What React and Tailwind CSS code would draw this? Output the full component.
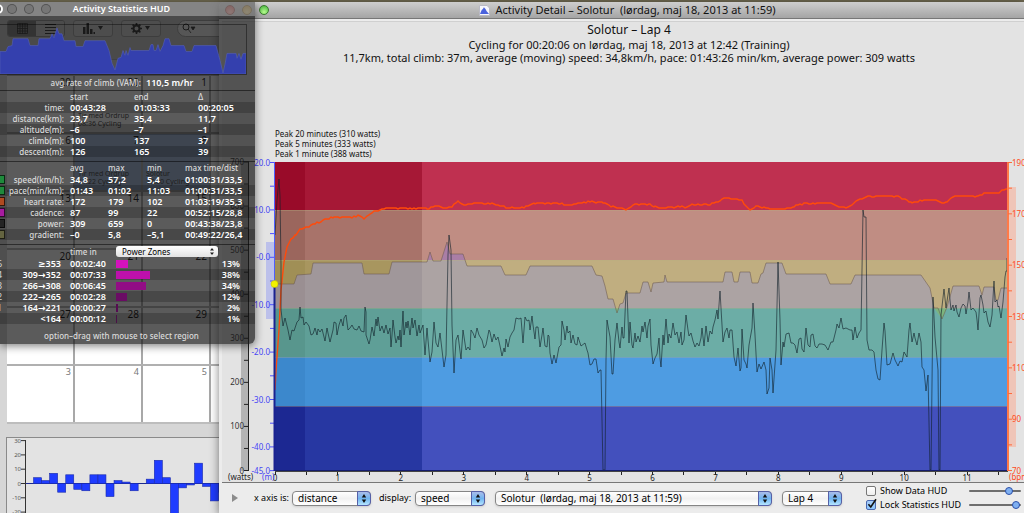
import React from "react";

const PLOT = { x: 275, y: 162, w: 733, h: 309 };

const ELEVATION =
  "275,284 294,284 297,275 311,274 313,263 362,263 364,274 389,274 392,262 427,262 430,252 433,261 441,261 447,242 450,254 463,254 467,266 501,266 505,275 526,275 530,266 592,266 596,275 602,276 605,286 608,299 613,299 617,313 620,304 623,303 626,293 640,293 643,282 648,282 651,292 653,283 664,282 665,275 667,282 723,282 725,272 732,272 734,282 738,282 740,272 750,272 752,283 758,283 761,274 763,273 766,263 782,263 786,274 826,274 830,284 851,284 855,275 921,275 930,288 934,308 938,308 942,319 947,307 953,286 979,286 982,295 984,287 994,287 996,300 998,300 1001,288 1008,288";

const POWER =
  "275,235 277,200 279,179 280,196 281,265 281,310 283,326 285,318 288,330 290,340 292,330 294,331 297,322 299,320 300,307 301,318 303,317 304,325 306,322 309,326 311,335 313,334 315,328 317,335 318,329 320,332 322,329 325,341 327,328 328,333 330,342 333,330 334,322 336,323 337,335 339,325 341,319 343,326 344,318 346,315 348,330 350,328 352,325 354,329 357,330 359,326 361,331 364,332 365,307 366,312 366,335 369,344 370,340 372,327 374,336 376,319 377,326 378,317 380,331 382,326 384,333 386,325 388,334 390,328 391,347 392,335 393,320 395,337 396,343 398,336 399,340 400,330 401,347 403,311 404,335 406,322 407,328 408,321 410,335 412,318 413,328 415,320 417,336 419,325 420,333 423,325 425,355 427,328 428,340 430,362 432,352 434,322 436,343 438,347 440,333 442,350 444,367 446,355 448,255 449,235 451,250 452,325 454,373 456,340 458,335 461,359 463,330 466,350 468,347 470,350 471,330 473,333 475,338 477,328 479,335 482,340 484,348 486,345 489,330 490,332 492,342 494,334 496,340 498,337 500,346 502,356 504,348 505,352 506,339 508,347 510,337 512,333 514,330 516,318 519,319 521,318 523,343 525,317 527,321 529,320 530,330 532,316 533,325 535,339 536,327 538,327 540,347 542,335 543,328 545,346 547,347 548,335 549,336 550,353 552,364 554,355 556,363 559,347 561,345 562,321 564,330 565,340 567,326 568,333 570,331 571,343 573,335 575,344 577,345 578,337 581,346 585,343 587,350 588,353 590,365 592,364 594,359 596,359 598,373 600,370 601,370 603,470 605,470 606,360 607,320 610,337 612,374 613,374 615,340 617,323 619,342 620,348 622,327 623,338 624,338 626,291 627,291 628,318 629,343 630,322 632,345 633,348 635,333 636,342 638,336 640,342 642,326 643,332 645,322 647,338 648,326 650,319 651,345 653,364 655,358 657,354 659,338 660,358 661,367 663,335 664,345 666,319 668,343 669,334 671,338 673,323 675,335 677,332 679,343 681,332 682,345 684,340 686,315 688,330 689,336 691,333 693,341 695,347 697,343 699,346 701,338 702,328 704,346 706,326 708,342 710,331 712,334 713,327 715,320 717,310 718,319 720,291 721,308 723,342 725,332 727,328 729,338 730,330 732,330 734,357 736,366 738,348 740,371 741,368 742,329 744,360 746,364 747,368 749,345 752,328 753,303 755,335 757,372 759,364 761,369 764,362 766,370 767,394 769,388 770,358 772,370 773,393 776,350 778,262 780,320 781,365 783,342 784,347 786,334 789,333 791,343 793,343 795,345 797,353 799,339 801,338 802,349 804,352 806,328 808,345 810,347 811,335 813,334 815,346 817,348 819,344 822,344 825,345 828,350 831,342 833,342 836,330 837,324 839,328 841,318 843,329 846,328 850,330 852,330 853,340 855,327 857,338 859,333 861,330 863,210 864,217 866,217 867,340 869,350 872,350 874,352 876,370 878,379 880,380 882,350 884,323 885,331 887,365 890,364 893,353 895,360 898,366 900,361 902,362 904,352 907,357 909,330 910,323 912,342 914,333 915,338 917,345 919,333 921,342 922,367 924,370 926,391 928,375 930,470 931,470 933,297 935,337 938,370 939,470 940,470 941,315 944,289 946,308 949,288 950,300 951,310 953,305 954,311 956,305 957,312 959,317 961,308 963,304 965,306 966,314 968,302 969,292 971,310 973,308 976,312 977,320 978,330 980,298 981,295 983,305 984,313 986,311 988,322 990,327 992,315 994,281 995,302 997,300 998,307 999,306 1001,318 1003,302 1005,277 1006,271 1007,271 1007,258";

const HEART_KNOTS = [
  [275, 390], [276, 370], [279, 330], [281, 290], [284, 262], [287, 247], [291, 239], [296, 234],
  [300, 229], [307, 227], [315, 223], [321, 221], [327, 218], [334, 217], [350, 217], [358, 215],
  [365, 218], [370, 213], [380, 209], [390, 208], [427, 208], [435, 206], [450, 207], [454, 204],
  [458, 201], [462, 204], [480, 203], [494, 203], [500, 206], [520, 208], [530, 205], [535, 203],
  [560, 203], [570, 205], [580, 203], [588, 201], [603, 202], [609, 205], [618, 208], [627, 209],
  [633, 204], [650, 204], [655, 206], [662, 208], [682, 206], [685, 208], [692, 204], [710, 204],
  [716, 202], [725, 198], [742, 200], [747, 207], [750, 210], [756, 206], [775, 209], [785, 209],
  [794, 206], [805, 203], [831, 203], [840, 207], [848, 207], [856, 201], [868, 196], [898, 196],
  [905, 199], [912, 202], [920, 200], [938, 200], [942, 203], [947, 202], [953, 196], [978, 196],
  [985, 193], [999, 193], [1002, 190], [1008, 189],
];

function heartTrace() {
  const out = [];
  for (let i = 0; i < HEART_KNOTS.length - 1; i++) {
    const [x0, y0] = HEART_KNOTS[i];
    const [x1, y1] = HEART_KNOTS[i + 1];
    for (let x = x0; x < x1; x += 2) {
      let y = y0 + ((y1 - y0) * (x - x0)) / (x1 - x0);
      if (x > 291) {
        const n = Math.sin(x * 12.9898) * 43758.5453;
        y = Math.round(y) + (n - Math.floor(n) > 0.72 ? 1 : 0);
      }
      out.push(`${x},${y}`);
    }
  }
  out.push("1008,189");
  return out.join(" ");
}

const COLUMNS = [
  { id: "a", x: 275, w: 30, zones: ["#990b29", "#9b665d", "#a08f56", "#58968d", "#3c88cc", "#1c2892"], area: "#9a8f92" },
  { id: "b", x: 305, w: 117, zones: ["#a61836", "#a8736a", "#a8965f", "#5f9f97", "#4290d5", "#2737a2"], area: "#a0979a" },
  { id: "c", x: 422, w: 586, zones: ["#bf3050", "#c08d83", "#c0ae80", "#6cada6", "#4e9ce2", "#4350bd"], area: "#aca3a3" },
];
const ZONE_Y = [162, 210, 260, 308, 357, 406, 471];

function Plot() {
  const area = `275,471 ${ELEVATION} 1008,471`;
  return (
    <svg
      className="block h-full w-full"
      viewBox={`${PLOT.x} ${PLOT.y} ${PLOT.w} ${PLOT.h}`}
      preserveAspectRatio="none"
      role="img"
      aria-label="Heart rate, power and altitude over distance"
    >
      <defs>
        <clipPath id="above"><rect x="275" y="162" width="733" height="98" /></clipPath>
        {COLUMNS.map((c) => (
          <clipPath id={`col-${c.id}`} key={c.id}>
            <rect x={c.x} y="260" width={c.w} height="48" />
          </clipPath>
        ))}
      </defs>
      {COLUMNS.map((c) => (
        <g key={c.id}>
          {c.zones.map((fill, i) => (
            <rect key={fill} x={c.x} y={ZONE_Y[i]} width={c.w} height={ZONE_Y[i + 1] - ZONE_Y[i]} fill={fill} />
          ))}
          <polygon points={area} fill={c.area} clipPath={`url(#col-${c.id})`} />
        </g>
      ))}
      <polygon points={area} fill="#aa7ea6" clipPath="url(#above)" />
      <polygon points="934,308 942,319 947,308" fill="#7cb57f" />
      <polygon points="615,308 617,313 619,308" fill="#7cb57f" />
      {ZONE_Y.slice(1, 6).map((y) => (
        <line key={y} x1="275" x2="1008" y1={y + 0.5} y2={y + 0.5} stroke="#b8b080" strokeOpacity="0.35" />
      ))}
      <polyline points={ELEVATION} fill="none" stroke="#6b5a50" strokeOpacity="0.55" vectorEffect="non-scaling-stroke" />
      <polyline points={heartTrace()} fill="none" stroke="#ff4a0a" strokeWidth="1.4" vectorEffect="non-scaling-stroke" />
      <polyline points={POWER} fill="none" stroke="#10202a" strokeOpacity="0.62" vectorEffect="non-scaling-stroke" />
      <line x1="275" x2="1008" y1="470.5" y2="470.5" stroke="#141c6c" vectorEffect="non-scaling-stroke" />
    </svg>
  );
}

const ALTITUDE = [20, 15, 10, 5, 0, -5, -10, -15, -20, -25, -30, -35, -40, -45];
const WATTS = [700, 650, 600, 550, 500, 450, 400, 350, 300, 250, 200, 150, 100, 50, 0];

function LeftAxes() {
  return (
    <svg className="relative z-10 block h-[325px] w-[53px] shrink-0 overflow-visible" viewBox="222 162 53 325" fontFamily='"Noto Sans", sans-serif' fontSize="8">
      <rect x="241" y="162" width="8" height="309" fill="#b4b4b4" />
      <rect x="266" y="242" width="8" height="77" fill="#bcc0ea" />
      <line x1="248.5" x2="248.5" y1="162" y2="471" stroke="#222" />
      {WATTS.map((w) => {
        const y = 470.5 - w * 0.4407;
        return (
          <g key={w}>
            <line x1="244" x2="249" y1={y} y2={y} stroke="#222" />
            {w % 100 === 0 && <text x="244" y={y + 3} textAnchor="end" fill="#333">{w}</text>}
          </g>
        );
      })}
      {ALTITUDE.map((m) => {
        const y = 162.5 + (20 - m) * 4.74;
        const label = m % 10 === 0 || m === -45;
        return (
          <g key={m}>
            <line x1="270" x2="274" y1={y} y2={y} stroke="#4f4fff" />
            {label && <text x="270" y={y + 3} textAnchor="end" fill="#4545f5">{m === 0 ? "-0.0" : m.toFixed(1)}</text>}
          </g>
        );
      })}
      <line x1="274.5" x2="274.5" y1="162" y2="284" stroke="#4f5fff" />
      <line x1="274.5" x2="274.5" y1="284" y2="471" stroke="#1a2290" strokeWidth="2" />
      <circle cx="274.5" cy="284" r="3.5" fill="#f2f200" stroke="#c0c000" strokeWidth="0.5" />
      <text x="228" y="480" fill="#222">(watts)</text>
      <text x="262" y="480" fill="#4545f5">(m)</text>
    </svg>
  );
}

function RightAxis() {
  const ticks = [190, 180, 170, 160, 150, 140, 130, 120, 110, 100, 90, 80, 70];
  return (
    <svg className="relative block h-[325px] w-[16px] shrink-0 overflow-visible" viewBox="1008 162 16 325" fontFamily='"Noto Sans", sans-serif' fontSize="8">
      <rect x="1009" y="187" width="7" height="260" fill="#efc5b8" />
      <line x1="1008" x2="1008" y1="162" y2="471" stroke="#ff7a48" strokeWidth="2" />
      {ticks.map((b) => {
        const y = 162.5 + (190 - b) * 2.567;
        return (
          <g key={b}>
            <line x1="1008" x2="1012" y1={y} y2={y} stroke="#ff6a3a" />
            {b % 20 === 10 && <text x="1012" y={y + 3} fill="#ff4a20">{b}</text>}
          </g>
        );
      })}
      <text x="1009" y="480" fill="#ff4a20">(bpm)</text>
    </svg>
  );
}

function DistanceAxis() {
  const marks = Array.from({ length: 24 }, (_, i) => i / 2);
  return (
    <div className="relative h-4 w-full border-t border-[#444]">
      {marks.map((d) => (
        <div
          key={d}
          className="absolute top-0 flex w-6 -translate-x-1/2 flex-col items-center text-[8px] leading-[6px] text-[#222]"
          style={{ left: `${(d * 100) / 11.65}%` }}
        >
          <span className="h-[3px] w-px bg-[#222]" />
          {Number.isInteger(d) && <span>{d}</span>}
        </div>
      ))}
    </div>
  );
}

function PopUp({ id, label, options, className }) {
  return (
    <div className={"relative flex h-[15px] " + className}>
      <select
        id={id}
        aria-label={label}
        className="h-full w-full appearance-none rounded-[4px] border border-[#858585] bg-gradient-to-b from-white via-[#f1f1f1] to-white py-0 pl-[5px] pr-4 text-[10px] leading-[13px] text-black shadow-sm"
      >
        {options.map((o) => <option key={o}>{o}</option>)}
      </select>
      <span className="pointer-events-none absolute inset-y-0 right-0 flex w-[14px] items-center justify-center rounded-r-[4px] border border-[#5560a8] bg-gradient-to-b from-[#a9bdea] via-[#6fb4f0] to-[#b5e6ff]">
        <svg className="h-[9px] w-[6px]" viewBox="0 0 6 9"><path d="M3 0L5.2 3.4H.8zM3 9L.8 5.6h4.4z" fill="#111" /></svg>
      </span>
    </div>
  );
}

const SLIDER =
  "h-[10px] w-[52px] appearance-none bg-transparent [&::-webkit-slider-runnable-track]:h-[2px] [&::-webkit-slider-runnable-track]:rounded-full [&::-webkit-slider-runnable-track]:bg-[#6e6e6e] [&::-webkit-slider-thumb]:-mt-[3px] [&::-webkit-slider-thumb]:h-2 [&::-webkit-slider-thumb]:w-2 [&::-webkit-slider-thumb]:appearance-none [&::-webkit-slider-thumb]:rounded-full [&::-webkit-slider-thumb]:border [&::-webkit-slider-thumb]:border-[#2c4fa8] [&::-webkit-slider-thumb]:bg-[#7fb0f2]";

function Check({ id, label, checked }) {
  return (
    <div className="flex h-[14px] items-center gap-1">
      <span className="relative flex">
        <input
          id={id}
          type="checkbox"
          defaultChecked={checked}
          className="peer size-[10px] appearance-none rounded-[2px] border border-[#777] bg-gradient-to-b from-white to-[#eee] checked:border-[#4a68b0] checked:from-[#a8cdf8] checked:to-[#8cc6ff]"
        />
        <svg className="pointer-events-none absolute -top-[2px] left-0 hidden h-3 w-3 peer-checked:block" viewBox="0 0 12 12">
          <path d="M2.4 6.2L4.8 9 10 1.2" fill="none" stroke="#111" strokeWidth="1.6" />
        </svg>
      </span>
      <label htmlFor={id} className="whitespace-nowrap">{label}</label>
    </div>
  );
}

function DetailWindow() {
  return (
    <section className="absolute bottom-0 left-[219px] right-0 top-[2px] flex flex-col rounded-tl-[5px] bg-[#ececec] shadow-[0_2px_10px_rgba(0,0,0,0.5)]">
      <header className="flex h-[17px] shrink-0 items-center rounded-tl-[5px] border-b border-[#777] bg-gradient-to-b from-[#cecece] to-[#a5a5a5] pl-[6px]">
        <div className="flex gap-[7px]">
          <button aria-label="Close" className="size-[10px] rounded-full border border-[#8c2a22] bg-[radial-gradient(circle_at_50%_75%,#ff9a90,#d8372c)]" />
          <button aria-label="Minimize" className="size-[10px] rounded-full border border-[#9c6f1c] bg-[radial-gradient(circle_at_50%_75%,#ffe28a,#e8a020)]" />
          <button aria-label="Zoom" className="size-[10px] rounded-full border border-[#3b7a2e] bg-[radial-gradient(circle_at_50%_75%,#b9ff90,#3fb038)]" />
        </div>
        <h1 className="flex flex-1 items-center justify-center gap-[5px] whitespace-pre pr-[38px] text-[11px] leading-[14px] text-[#111]">
          <svg className="h-[11px] w-[11px]" viewBox="0 0 11 11">
            <path d="M.5.5h7.500l2.500 2.500v7.500H.5z" fill="#f6f6fb" stroke="#b9b9c4" />
            <path d="M1 9l1.700-4 1.200-1 1-1.800 1.600 1.800 1 2 2.500 3z" fill="#4a62dd" />
          </svg>
          {"Activity Detail – Solotur  (lørdag, maj 18, 2013 at 11:59)"}
        </h1>
      </header>
      <div className="ml-[3px] mt-[2px] flex flex-col border-b border-t border-b-[#777] border-t-[#d0d0d0] bg-[#e3e3e3]">
        <div className="pl-3 text-center text-[11px] leading-[13px] text-[#111]">
          <h2 className="text-xs leading-4">Solotur – Lap 4</h2>
          <p>Cycling for 00:20:06 on lørdag, maj 18, 2013 at 12:42 (Training)</p>
          <p>11,7km, total climb: 37m, average (moving) speed: 34,8km/h, pace: 01:43:26 min/km, average power: 309 watts</p>
        </div>
        <ul className="ml-[53px] mt-[65px] text-[8px] leading-[10px] text-[#111]">
          <li>Peak 20 minutes (310 watts)</li>
          <li>Peak 5 minutes (333 watts)</li>
          <li>Peak 1 minute (388 watts)</li>
        </ul>
        <div className="mt-[3px] flex h-[320px]">
          <LeftAxes />
          <div className="min-w-0 flex-1">
            <div className="h-[309px]"><Plot /></div>
            <DistanceAxis />
          </div>
          <RightAxis />
        </div>
      </div>
      <footer className="flex h-[30px] items-center overflow-hidden pl-[13px] text-[9px] leading-[14px] text-black">
        <button aria-label="Show details" className="mr-4 flex">
          <svg className="h-2 w-[6px]" viewBox="0 0 6 8"><path d="M0 0l6 4-6 4z" fill="#8c8c8c" /></svg>
        </button>
        <label htmlFor="xaxis" className="w-[38px] whitespace-nowrap">x axis is:</label>
        <PopUp id="xaxis" options={["distance", "time"]} className="w-[79px]" />
        <label htmlFor="display" className="ml-2 w-9 whitespace-nowrap">display:</label>
        <PopUp id="display" options={["speed", "pace"]} className="w-[70px]" />
        <PopUp id="activity" label="Activity" options={["Solotur\u00a0 (lørdag, maj 18, 2013 at 11:59)"]} className="ml-[10px] min-w-0 flex-1" />
        <PopUp id="lap" label="Lap" options={["Lap 4", "Lap 3", "Lap 2", "Lap 1"]} className="ml-[10px] w-[60px]" />
        <div className="ml-6 w-[103px]">
          <Check id="datahud" label="Show Data HUD" />
          <Check id="statshud" label="Lock Statistics HUD" checked />
        </div>
        <div className="flex w-[55px] flex-col gap-1">
          <input type="range" aria-label="Data HUD opacity" defaultValue="82" className={SLIDER} />
          <input type="range" aria-label="Statistics HUD opacity" defaultValue="98" className={SLIDER} />
        </div>
      </footer>
    </section>
  );
}

const WEEKS = [
  { days: ["29", "30", "1"], notes: ["", "Tir med Ordrup\n08:36 Cycling", ""] },
  { days: ["6", "7", "8"], notes: ["", "Tir med Ordrup\n11:22 Cycling", "Solotur\n17:00 Cycling"] },
  { days: ["13", "14", "15"], notes: ["", "", ""] },
  { days: ["20", "21", "22"], notes: ["", "", ""] },
  { days: ["27", "28", "29"], notes: ["", "", ""] },
  { days: ["3", "4", "5"], notes: ["", "", ""] },
];

const LOAD = [0, 4, 2, 7, -6, 6, -4, -5, 6, 6, -9, 2, 1, -5, 0, 3, 16, 4, -24, -3, -1, 14, -2, -12, -6];

function LoadChart() {
  return (
    <div className="ml-[6px] mt-[13px] h-[92px] shrink-0 border border-[#8a8a8a] bg-[#e3e3e3]">
      <svg className="block h-[90px] w-[230px]" viewBox="7 438 230 90" fontFamily='"Noto Sans", sans-serif' fontSize="6" fill="#555">
        {[30, 20, 10, 0, -10, -20].map((v) => {
          const y = 483.5 - v * 1.43;
          return (
            <g key={v}>
              <text x="21" y={y + 2} textAnchor="end">{v}</text>
              <line x1="21" x2="26" y1={y} y2={y} stroke="#333" />
            </g>
          );
        })}
        <line x1="25.5" x2="25.5" y1="440" y2="528" stroke="#333" />
        <line x1="26" x2="237" y1="483.5" y2="483.5" stroke="#1c2a90" />
        {LOAD.map((v, i) => {
          const h = Math.abs(v) * 1.45;
          return <rect key={i} x={25.5 + i * 8.05} y={v > 0 ? 483.5 - h : 483.5} width="8" height={h} fill="#1f3cff" stroke="#1a2aa8" strokeWidth="0.6" />;
        })}
      </svg>
    </div>
  );
}

function CalendarWindow() {
  return (
    <section className="absolute bottom-0 left-0 top-[2px] flex w-[240px] flex-col overflow-hidden bg-[#d6d6d6] pt-[14px]">
      <div className="flex h-[44px] shrink-0 items-start gap-2 border-b border-[#aaa] bg-[#c4c4c4] pl-[7px] pt-[4px]">
        <div className="flex h-[17px] w-[59px] overflow-hidden rounded-[3px] border border-[#888]">
          <button aria-label="Month view" className="flex flex-1 items-center justify-center bg-[#777]">
            <svg className="h-[11px] w-[11px]" viewBox="0 0 11 11"><path d="M.5.5h10v10H.5zM3 0v11M5.500 0v11M8 0v11M0 3h11M0 5.500h11M0 8h11" fill="none" stroke="#222" strokeWidth=".8" /></svg>
          </button>
          <button aria-label="List view" className="flex flex-1 items-center justify-center bg-[#c9c9c9]">
            <svg className="h-[10px] w-[11px]" viewBox="0 0 11 10"><path d="M0 .5h11M0 3.500h11M0 6.500h11M0 9.500h11" stroke="#222" /></svg>
          </button>
        </div>
        <button aria-label="Charts" className="flex h-[17px] w-10 items-center justify-center rounded-[3px] border border-[#999] bg-[#cfcfcf]">
          <svg className="h-[11px] w-[20px]" viewBox="0 0 20 11"><path d="M0 4h2.500v7H0zM3.500 0H6v11H3.500zM7 6h2.500v5H7zM10.500 9h1.500v2h-1.500zM15 3h5l-2.500 4z" fill="#222" /></svg>
        </button>
        <button aria-label="Actions" className="flex h-[17px] w-10 items-center justify-center rounded-[3px] border border-[#999] bg-[#cfcfcf]">
          <svg className="h-[11px] w-[20px]" viewBox="0 0 20 11"><circle cx="5.500" cy="5.500" r="3" fill="none" stroke="#222" strokeWidth="2" /><path d="M5.500 0v11M0 5.500h11M1.600 1.600l7.800 7.800M9.400 1.600l-7.800 7.800" stroke="#222" strokeDasharray="2 7" strokeWidth="1.600" /><path d="M14 3h5l-2.500 4z" fill="#222" /></svg>
        </button>
        <button aria-label="Search" className="ml-2 flex h-[17px] w-16 items-center rounded-full border border-[#999] bg-[#eee] pl-1">
          <svg className="h-[11px] w-[14px]" viewBox="0 0 14 11"><circle cx="4" cy="4" r="3" fill="none" stroke="#222" /><path d="M6 6l3 4M9 4h4l-2 3z" fill="#222" stroke="#222" strokeWidth=".8" /></svg>
        </button>
      </div>
      <div className="ml-[7px] grid h-[14px] shrink-0 grid-cols-[68px_68px_68px_68px] text-center text-[9px] leading-3 text-[#333]">
        <span>m</span><span>t</span><span>o</span>
      </div>
      <div className="ml-[7px] shrink-0 border-b-2 border-[#bdbdbd]">
        {WEEKS.map((w, i) => (
          <div key={i} className="grid h-[58px] grid-cols-[68px_68px_68px_68px] border-t-2 border-[#b0b0b0]">
            {w.days.map((d, j) => (
              <div key={j} className={"relative border-r-2 border-[#a8a8a8] pr-[2px] text-right leading-3 " + (i === 1 && j > 0 ? "bg-[#9db4d8] " : "bg-white ") + (i === 5 ? "text-[9px] text-[#777]" : "text-[10px] text-black")}>
                {d}
                {w.notes[j] && (
                  <div className="absolute bottom-1 left-[3px] whitespace-pre text-left text-[7px] leading-2 text-[#333]">{w.notes[j]}</div>
                )}
              </div>
            ))}
            <div className="bg-white" />
          </div>
        ))}
      </div>
      <LoadChart />
    </section>
  );
}

const TRIP = [
  ["time:", "00:43:28", "01:03:33", "00:20:05"],
  ["distance(km):", "23,7", "35,4", "11,7"],
  ["altitude(m):", "–6", "–7", "–1"],
  ["climb(m):", "100", "137", "37"],
  ["descent(m):", "126", "165", "39"],
];
const STATS = [
  ["bg-[#1f8a3c]", "speed(km/h):", "34,8", "57,2", "5,4", "01:00:31/33,5"],
  ["bg-[#1f8a3c]", "pace(min/km):", "01:43", "01:02", "11:03", "01:00:31/33,5"],
  ["bg-[#b04a20]", "heart rate:", "172", "179", "102", "01:03:19/35,3"],
  ["bg-[#a81ca0]", "cadence:", "87", "99", "22", "00:52:15/28,8"],
  ["bg-[#242424]", "power:", "309", "659", "0", "00:43:38/23,8"],
  ["bg-[#646440]", "gradient:", "–0", "5,8", "–5,1", "00:49:22/26,4"],
];
const ZONES = [
  ["6", "≥353", "00:02:40", "w-3 bg-[#d412bc]", "13%"],
  ["4", "309→352", "00:07:33", "w-[34px] bg-[#bd10ab]", "38%"],
  ["3", "266→308", "00:06:45", "w-[30px] bg-[#920c85]", "34%"],
  ["2", "222→265", "00:02:28", "w-[11px] bg-[#6a0c64]", "12%"],
  ["1", "164→221", "00:00:27", "w-[2px] bg-[#560c52]", "2%"],
  ["", "<164", "00:00:12", "w-px bg-[#4a1048]", "1%"],
];

const HEAD = "p-0 text-left text-[8px] font-medium text-[#dadada]";
const LABEL = "p-0 pr-[6px] text-right text-[8px] font-medium text-[#dadada]";
const RULE = "border-t border-black/50";

function StatisticsHud() {
  return (
    <aside className="absolute left-0 top-[2px] w-[255px] overflow-hidden rounded-br-[6px] bg-[#161616b4] text-[9px] leading-[11px] text-white shadow-[0_2px_8px_rgba(0,0,0,0.5)]">
      <header className="relative flex h-[14px] items-center justify-center bg-white/30 pr-3 text-[9px] font-semibold leading-[14px]">
        <div className="absolute left-[7px] top-[2px] flex gap-[7px]">
          <span className="size-[10px] rounded-full border border-black/30 bg-black/10" />
          <span className="size-[10px] rounded-full border border-black/30 bg-black/10" />
          <span className="size-[10px] rounded-full border border-black/30 bg-black/10" />
        </div>
        <button aria-label="Close HUD" className="absolute -left-[7px] top-[2px] size-[10px] rounded-full border-2 border-white bg-[#555]" />
        <h2>Activity Statistics HUD</h2>
      </header>
      <div className="mr-2 mt-2 h-[51px] border border-l-0 border-black/40">
        <svg className="block h-full w-full" viewBox="0 24 246 50" preserveAspectRatio="none">
          <path d="M0 51H6L8 46 12 45 13 38H28L30 45H38L39 38H50L52 33 54 37 57 27 59 33H62L64 40H75L76 46H83L85 40H105L109 50 112 63 115 70 118 58 121 57 123 50 125 55 126 50 128 55 130 47 131 50H149L151 44H153L154 50H156L158 44 160 51 163 45 165 38H169L171 45H184L186 51H192L194 45H216L220 60 223 73 225 64 227 53H236L237 58 239 53 241 59 243 53H246V74H0z" fill="#3440ae" stroke="#5560b8" strokeWidth=".6" />
        </svg>
      </div>
      <p className="flex h-[15px] items-center gap-[5px]">
        <span className="w-[141px] text-right text-[8px] font-medium text-[#dadada]">avg rate of climb (VAM):</span>
        <b className="font-semibold">110,5 m/hr</b>
      </p>
      <table className={"w-full table-fixed border-collapse " + RULE}>
        <colgroup><col className="w-[70px]" /><col className="w-16" /><col className="w-16" /><col /></colgroup>
        <thead>
          <tr className="h-[11px]"><td /><th className={HEAD}>start</th><th className={HEAD}>end</th><th className={HEAD}>Δ</th></tr>
        </thead>
        <tbody className="font-semibold">
          {TRIP.map(([label, ...cells]) => (
            <tr key={label} className="h-[11px] odd:bg-black/20">
              <th className={LABEL}>{label}</th>
              {cells.map((c, i) => <td key={i} className="p-0">{c}</td>)}
            </tr>
          ))}
        </tbody>
      </table>
      <div className="h-1" />
      <table className={"w-full table-fixed border-collapse " + RULE}>
        <colgroup><col className="w-[5px]" /><col className="w-[65px]" /><col className="w-[38px]" /><col className="w-[39px]" /><col className="w-[38px]" /><col /></colgroup>
        <thead>
          <tr className="h-3"><td /><td /><th className={HEAD}>avg</th><th className={HEAD}>max</th><th className={HEAD}>min</th><th className={HEAD + " whitespace-nowrap"}>max time/dist</th></tr>
        </thead>
        <tbody className="font-semibold">
          {STATS.map(([swatch, label, ...cells]) => (
            <tr key={label} className="h-[11px] even:bg-black/20">
              <td className="p-0"><span className={"block h-[9px] w-[5px] border border-l-0 border-black/70 " + swatch} /></td>
              <th className={LABEL + " whitespace-nowrap"}>{label}</th>
              {cells.map((c, i) => <td key={i} className="p-0">{c}</td>)}
            </tr>
          ))}
        </tbody>
      </table>
      <div className="h-1" />
      <table className={"w-full table-fixed border-collapse " + RULE}>
        <colgroup><col className="w-[5px]" /><col className="w-[65px]" /><col className="w-[46px]" /><col className="w-[102px]" /><col /></colgroup>
        <thead>
          <tr className="h-[14px]">
            <td /><td /><th className={HEAD}>time in</th>
            <td className="p-0">
              <div className="relative">
                <select aria-label="Zones" className="block h-[11px] w-full appearance-none rounded-[3px] bg-gradient-to-b from-white to-[#e2e2e2] py-0 pl-[6px] text-[8px] leading-[11px] text-black">
                  <option>Power Zones</option>
                  <option>Heart Rate Zones</option>
                </select>
                <svg className="pointer-events-none absolute right-[4px] top-[2px] h-[7px] w-[4px]" viewBox="0 0 4 7"><path d="M2 0l2 2.600H0zM2 7L0 4.400h4z" fill="#222" /></svg>
              </div>
            </td>
            <td />
          </tr>
        </thead>
        <tbody className="font-semibold">
          {ZONES.map(([n, range, time, bar, pct]) => (
            <tr key={range} className="h-[11px] even:bg-black/20">
              <td className="p-0 font-normal text-[#d4d4d4]"><span className="-ml-[3px] block">{n}</span></td>
              <td className="p-0 pr-[9px] text-right">{range}</td>
              <td className="p-0">{time}</td>
              <td className="p-0"><span className={"block h-2 " + bar} /></td>
              <td className="p-0 pr-[15px] text-right">{pct}</td>
            </tr>
          ))}
        </tbody>
      </table>
      <p className="pb-[3px] pr-3 pt-[6px] text-center text-[8px] font-medium text-[#dadada]">option–drag with mouse to select region</p>
    </aside>
  );
}

export default function App() {
  return (
    <main className="relative isolate min-h-screen overflow-hidden bg-[#6e6850] font-['Noto_Sans','DejaVu_Sans',sans-serif]">
      <CalendarWindow />
      <DetailWindow />
      <div className="relative z-20"><StatisticsHud /></div>
    </main>
  );
}
